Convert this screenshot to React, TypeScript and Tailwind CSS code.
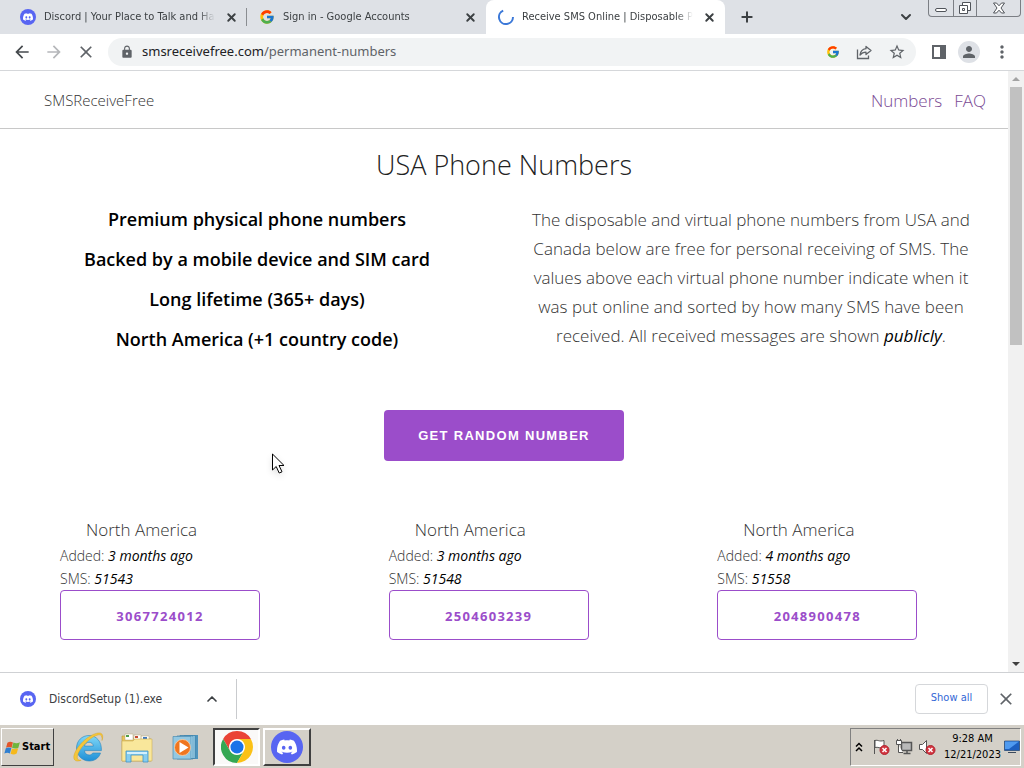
import type { ReactNode } from 'react'
import { FcGoogle } from 'react-icons/fc'
import { SiDiscord } from 'react-icons/si'
import { MdArrowBack, MdArrowForward, MdClose, MdLock, MdMoreVert, MdPerson, MdStarOutline } from 'react-icons/md'
import { ChevronDown, ChevronUp, Plus, X } from 'lucide-react'

interface TabProps {
  icon: ReactNode
  title: string
  active?: boolean
  separator?: boolean
}

interface PhoneNumber {
  number: string
  added: string
  sms: number
}

const highlights = [
  'Premium physical phone numbers',
  'Backed by a mobile device and SIM card',
  'Long lifetime (365+ days)',
  'North America (+1 country code)',
]

const numbers: PhoneNumber[] = [
  { number: '3067724012', added: '3 months ago', sms: 51543 },
  { number: '2504603239', added: '3 months ago', sms: 51548 },
  { number: '2048900478', added: '4 months ago', sms: 51558 },
]

function DiscordBadge({ large = false }: { large?: boolean }) {
  return (
    <span className={`flex shrink-0 items-center justify-center rounded-full bg-[#5865f2] text-white ${large ? 'size-8' : 'size-4'}`}>
      <SiDiscord className={large ? 'size-5' : 'size-[10px]'} />
    </span>
  )
}

function Spinner() {
  return (
    <svg viewBox="0 0 16 16" className="size-4 shrink-0" fill="none" stroke="#3b78d8" strokeWidth="2">
      <path d="M5.2 1.6A7 7 0 1 0 15 8" />
    </svg>
  )
}

function ChromeLogo() {
  return (
    <svg viewBox="0 0 48 48" className="size-8">
      <circle cx="24" cy="24" r="13" fill="#fff" />
      <path fill="#ea4335" d="M24 12h20.78A24 24 0 0 0 3.21 12l10.4 18A12 12 0 0 1 24 12z" />
      <path fill="#34a853" d="M34.39 30 24 48A24 24 0 0 1 3.21 12l10.4 18a12 12 0 0 0 20.78 0z" />
      <path fill="#fbc116" d="M24 12h20.78A24 24 0 0 1 24 48l10.39-18A12 12 0 0 0 24 12z" />
      <circle cx="24" cy="24" r="9.8" fill="#1a73e8" />
    </svg>
  )
}

function WindowsFlag() {
  return (
    <svg viewBox="0 1 15 13" className="h-[15px] w-[17px] shrink-0">
      <path fill="#e2552a" d="M3 3.2C4.800 2 6.300 2.200 7.900 3L6.700 7.700C5 6.800 3.600 6.800 1.800 7.700z" />
      <path fill="#6fb53c" d="M8.300 3.100c1.700.8 3.700.9 5.700-.2l-1.300 4.800c-1.700 1-3.700 1-5.600.1z" />
      <path fill="#2f7fd0" d="M1.600 8.200c1.700-1 3.200-1 4.900-.2L5.200 12.700c-1.600-.8-3.200-.8-4.900.2z" />
      <path fill="#f6b91c" d="M7 8.300c1.700.8 3.600.9 5.500-.1l-1.300 4.600c-1.700 1-3.500 1-5.400.2z" />
    </svg>
  )
}

function ExplorerIcon() {
  return (
    <svg viewBox="0 0 32 32" className="size-8">
      <defs>
        <linearGradient id="ie" x1="0" y1="0" x2="0" y2="1">
          <stop offset="0" stopColor="#7fd8f8" />
          <stop offset="1" stopColor="#1f8fd6" />
        </linearGradient>
      </defs>
      <path
        fill="url(#ie)"
        stroke="#2583bd"
        strokeWidth=".6"
        d="M17 4.500C10 4.500 4.500 9.800 4.500 17S10 30 17.300 30c5.200 0 9.600-2.800 11.200-8h-7.800c-.7 1.400-2 2-3.600 2-2.700 0-4.400-1.700-4.600-4.400h16.900C29.900 10.800 24.500 4.500 17 4.500zm-4.500 10.600c.5-2.500 2.100-3.800 4.500-3.800s4 1.300 4.400 3.800z"
      />
      <path
        fill="#f4c63a"
        stroke="#d39c1c"
        strokeWidth=".4"
        d="M30 9.500c1.300-3.500 1-6.500-1.300-7.300-3-1.100-9 1.300-14.500 5.500C4.800 15.200-.5 25.500 2.700 29c1.300 1.500 3.700 1.300 6.500.2-2.200.2-3.700-.6-3.900-2.500C4.900 22.700 9.500 15.200 16.500 9.400c5-4.100 10-6.300 11.900-5.400 1.300.6 1.800 2.700 1.600 5.500z"
      />
    </svg>
  )
}

function FolderIcon() {
  return (
    <svg viewBox="0 0 32 32" className="size-8">
      <path fill="#e6c45e" stroke="#b9943a" strokeWidth=".6" d="M1 5h10l2 3h17v22H1z" />
      <path fill="#fff" stroke="#b9a878" strokeWidth=".5" d="M4 3h8v6H4zM13 4h7v5h-7zM20 5h8v5h-8z" />
      <path fill="#4f9f4a" d="M5 4h3v2H5z" />
      <path fill="#c74a32" d="M14 5h3v2h-3z" />
      <path fill="#3d78c0" d="M22 6h4v2h-4z" />
      <path fill="#f9e79b" stroke="#cfae55" strokeWidth=".6" d="M1 10h11l2-2h17v22H1z" />
      <path fill="#86cdf0" stroke="#3f92c8" strokeWidth=".8" d="M5 20h22v11h-5v-7H10v7H5z" />
      <path fill="#d3f0fd" d="M6 21h20v2H6z" />
    </svg>
  )
}

function MediaPlayerIcon() {
  return (
    <svg viewBox="0 0 32 32" className="size-8">
      <path fill="#4e94bd" d="M14 4h14v24H14z" />
      <path fill="#a9daf2" stroke="#3b7fa8" strokeWidth=".7" d="M10 4.500h15v23H10zM7 5h16v23H7z" />
      <path fill="#93c8e2" stroke="#4c8db1" strokeWidth=".7" d="M3 5.500h18v22.500H3z" />
      <circle cx="12.500" cy="16.500" r="8" fill="#f0761f" stroke="#fbd0a8" strokeWidth=".8" />
      <path fill="#fff" d="M9.500 11 18.500 16.500 9.500 22z" />
    </svg>
  )
}

function ShareIcon() {
  return (
    <svg viewBox="0 0 16 16" className="size-4" fill="none" stroke="#5f6368" strokeWidth="1.3">
      <path d="M1.500 5.500v9h11v-3" />
      <path strokeLinejoin="round" d="M10 2.500 15 6.500l-5 4V8.200c-2.600 0-4.400.8-6 2.800.4-3.500 2.500-5.800 6-6.300z" />
    </svg>
  )
}

function TrayIcon({ children, blocked = false }: { children: ReactNode; blocked?: boolean }) {
  return (
    <svg viewBox="0 0 18 18" className="size-[18px] shrink-0" fill="#fff" stroke="#555" strokeWidth="1">
      {children}
      {blocked && (
        <>
          <circle cx="12.500" cy="12" r="4.500" fill="#d3343f" stroke="#b02430" />
          <path stroke="#fff" strokeWidth="1.500" d="m10.500 10 4 4m0-4-4 4" />
        </>
      )}
    </svg>
  )
}

function Tab({ icon, title, active = false, separator = false }: TabProps) {
  return (
    <div
      className={`relative flex h-full w-[239px] min-w-0 items-center gap-2 pl-3 pr-2 ${
        active ? 'rounded-t-lg bg-white' : ''
      }`}
    >
      {icon}
      <span className="min-w-0 flex-1 overflow-hidden whitespace-nowrap mask-r-from-90% text-[11px] text-[#3c4043]">{title}</span>
      <button aria-label={`Close ${title}`} className="flex size-4 items-center justify-center text-[#3c4043]">
        <X className="size-[13px]" strokeWidth={3.500} />
      </button>
      {separator && <span className="absolute right-0 top-2 h-[18px] w-px bg-[#8a8d91]" />}
    </div>
  )
}

function TabStrip() {
  return (
    <div className="flex h-[34px] shrink-0 bg-[#dee1e6] pl-2">
      <Tab icon={<DiscordBadge />} title="Discord | Your Place to Talk and Han" separator />
      <Tab icon={<FcGoogle className="size-4 shrink-0" />} title="Sign in - Google Accounts" />
      <Tab icon={<Spinner />} title="Receive SMS Online | Disposable Ph" active />
      <button aria-label="New tab" className="ml-3 flex w-5 items-center justify-center text-[#3c4043]">
        <Plus className="size-4" strokeWidth={3} />
      </button>
      <div className="flex-1" />
      <button aria-label="Search tabs" className="mr-3 flex w-5 items-center justify-center text-[#3c4043]">
        <ChevronDown className="size-4" strokeWidth={3} />
      </button>
      <div className="mr-[3px] flex h-[17px] rounded-b border border-t-0 border-[#7b7e84] text-[#50545a]">
        <button aria-label="Minimize" className="flex w-6 items-end justify-center pb-1">
          <span className="h-1 w-3 rounded-sm border border-current bg-white" />
        </button>
        <button aria-label="Restore" className="flex w-6 items-center justify-center border-x border-[#7b7e84]">
          <svg viewBox="0 0 14 14" className="size-[14px]" fill="#fff" stroke="currentColor">
            <path d="M4.500 1.500h8v8h-8z" />
            <path d="M1.500 4.500h8v8h-8zM4.500 7.500h2v2h-2z" />
          </svg>
        </button>
        <button aria-label="Close window" className="flex w-[43px] items-center justify-center">
          <svg viewBox="0 0 14 12" className="h-3 w-[14px]" fill="#fff" stroke="currentColor">
            <path d="M1.500 1h3L7 3.800 9.500 1h3L9 6l3.500 5h-3L7 8.200 4.500 11h-3L5 6z" />
          </svg>
        </button>
      </div>
    </div>
  )
}

function Toolbar() {
  return (
    <div className="flex h-[37px] shrink-0 items-center border-b border-[#d5d7da] bg-white px-3 text-[#5f6368]">
      <div className="flex gap-3">
        <button aria-label="Back" className="text-[#45494d]"><MdArrowBack className="size-5" /></button>
        <button aria-label="Forward" className="text-[#b5b7ba]"><MdArrowForward className="size-5" /></button>
        <button aria-label="Stop loading"><MdClose className="size-5" /></button>
      </div>
      <div className="ml-3 flex h-7 flex-1 items-center gap-4 rounded-full bg-[#f1f3f4] pl-3 pr-[10px]">
        <MdLock className="size-[14px] shrink-0" />
        {/* the typed address is shown in two tones, so the field's own text stays transparent */}
        <div className="relative -ml-2 flex-1 font-['Noto_Sans',sans-serif] text-[13px]">
          <input
            aria-label="Address"
            defaultValue="smsreceivefree.com/permanent-numbers"
            className="w-full bg-transparent text-transparent caret-black outline-none"
          />
          <span aria-hidden="true" className="pointer-events-none absolute inset-0 whitespace-nowrap">
            <span className="text-[#202124]">smsreceivefree.com</span>/permanent-numbers
          </span>
        </div>
        <button aria-label="Search with Google"><FcGoogle className="size-[14px]" /></button>
        <button aria-label="Share"><ShareIcon /></button>
        <button aria-label="Bookmark this page"><MdStarOutline className="size-[18px]" /></button>
      </div>
      <div className="ml-4 flex items-center gap-3">
        <button aria-label="Side panel" className="flex h-[14px] w-[14px] justify-end border-2 border-current">
          <span className="h-full w-1 bg-current" />
        </button>
        <button aria-label="Profile" className="flex size-[22px] items-center justify-center rounded-full bg-[#dee1e6]">
          <MdPerson className="size-[18px]" />
        </button>
        <button aria-label="Menu"><MdMoreVert className="size-5" /></button>
      </div>
    </div>
  )
}

function NumberCard({ number, added, sms }: PhoneNumber) {
  return (
    <div className="pl-[49px]">
      <h2 className="pl-[26px] text-[17px] leading-[28px]">North America</h2>
      <p className="text-[14px] leading-[23px]">
        Added: <em className="font-normal text-black">{added}</em>
      </p>
      <p className="text-[14px] leading-[23px]">
        SMS: <em className="font-normal text-black">{sms}</em>
      </p>
      <button className="h-[50px] w-[200px] rounded border border-[#9b4dca] pt-1 text-[13px] font-bold tracking-widest text-[#9b4dca]">
        {number}
      </button>
    </div>
  )
}

function Page() {
  return (
    <main className="min-w-0 flex-1 overflow-hidden bg-white font-['Open_Sans','Noto_Sans',sans-serif] font-light text-[#333]">
      <nav className="flex h-[58px] items-center justify-between border-b border-[#c8c8c8] pt-[2px] pl-11 pr-[22px]">
        <a href="#home" className="text-[15px]">SMSReceiveFree</a>
        <div className="flex gap-3 text-[17px] text-[#7a4a94]">
          <a href="#numbers">Numbers</a>
          <a href="#faq">FAQ</a>
        </div>
      </nav>
      <h1 className="pt-4 text-center text-[27px] leading-[40px] text-[#222]">USA Phone Numbers</h1>
      <section className="mt-5 grid grid-cols-2 px-[10px] text-center text-[17px]">
        <div className="px-5 text-[18px] font-semibold text-black">
          {highlights.map((text) => (
            <p key={text} className="mb-3 leading-[28px]">{text}</p>
          ))}
        </div>
        <p className="px-5 leading-[29px]">
          The disposable and virtual phone numbers from USA and Canada below are free for personal receiving of SMS. The
          values above each virtual phone number indicate when it was put online and sorted by how many SMS have been
          received. All received messages are shown <em className="font-normal text-black">publicly</em>.
        </p>
      </section>
      <div className="mt-[45px] flex justify-center">
        <button className="h-[51px] w-60 rounded bg-[#9b4dca] font-['Liberation_Sans',sans-serif] text-[13px] font-bold tracking-widest text-white uppercase">
          Get random number
        </button>
      </div>
      <section className="mt-[55px] grid grid-cols-3 px-[11px]">
        {numbers.map((item) => (
          <NumberCard key={item.number} {...item} />
        ))}
      </section>
    </main>
  )
}

function Scrollbar() {
  return (
    <div className="flex w-4 shrink-0 flex-col items-center bg-[#f1f1f1]">
      <svg viewBox="0 0 16 16" className="size-4 shrink-0" fill="#a3a3a3"><path d="M4 10h8L8 6z" /></svg>
      <div className="h-3/7 w-3 bg-[#c1c1c1]" />
      <div className="flex-1" />
      <svg viewBox="0 0 16 16" className="size-4 shrink-0" fill="#404040"><path d="M4 6h8l-4 4z" /></svg>
    </div>
  )
}

function DownloadBar() {
  return (
    <div className="flex h-[52px] shrink-0 items-center border-t border-[#cfd1d4] bg-white pr-2 text-[#3c4043]">
      <div className="flex h-10 w-[237px] items-center border-r border-[#c9cbce] pl-5 pr-4">
        <DiscordBadge />
        <span className="ml-[13px] flex-1 text-[12px]">DiscordSetup (1).exe</span>
        <button aria-label="Download options"><ChevronUp className="size-4" strokeWidth={2.500} /></button>
      </div>
      <div className="flex-1" />
      <button className="h-[30px] w-[73px] rounded border border-[#d5d7da] text-[11px] text-[#3367d6]">Show all</button>
      <button aria-label="Close downloads" className="ml-2 text-[#5f6368]"><MdClose className="size-5" /></button>
    </div>
  )
}

function Taskbar() {
  return (
    <footer className="flex h-11 shrink-0 items-stretch border-t border-white bg-[#d4d0c8] pt-[3px] pb-[2px] pl-px pr-[3px] text-black">
      <button className="flex w-[53px] items-center gap-px border border-t-white border-r-[#404040] border-b-[#404040] border-l-white pl-[2px] text-[11px] font-bold">
        <WindowsFlag />
        Start
      </button>
      <div className="ml-[18px] flex items-center gap-[17px]">
        <button aria-label="Internet Explorer"><ExplorerIcon /></button>
        <button aria-label="File Explorer"><FolderIcon /></button>
        <button aria-label="Media Player"><MediaPlayerIcon /></button>
      </div>
      <button
        aria-label="Chrome"
        className="ml-[11px] flex w-[47px] items-center justify-center border-2 border-t-[#404040] border-r-white border-b-white border-l-[#404040] bg-[#faf9f8]"
      >
        <ChromeLogo />
      </button>
      <button
        aria-label="Discord"
        className="ml-[3px] flex w-12 items-center justify-center border-2 border-t-white border-r-[#404040] border-b-[#404040] border-l-white"
      >
        <DiscordBadge large />
      </button>
      <div className="flex-1" />
      <div className="flex items-center border border-t-[#808080] border-r-white border-b-white border-l-[#808080] pl-1">
        <button aria-label="Show hidden icons">
          <svg viewBox="0 0 8 10" className="h-[10px] w-2" fill="none" stroke="#000" strokeWidth="1.500">
            <path d="m1 4.500 3-3 3 3M1 9l3-3 3 3" />
          </svg>
        </button>
        <div className="ml-[9px] flex gap-[5px]">
          <TrayIcon blocked>
            <path d="M2.500 2v14" />
            <path d="M3 2.500c3-1 4 1.500 9 0v7c-4 1.500-6-1-9 0z" />
          </TrayIcon>
          <TrayIcon>
            <path fill="#b9b9b9" strokeWidth="1.500" d="M6.500 4.500h10v8h-10zM8.500 15.500h7M12 13v2" />
            <path d="M1.500 2.500h5v4h-5zM2.500 1v2m3-2v2M3.500 7v7.500H8" />
          </TrayIcon>
          <TrayIcon blocked>
            <path d="M1.500 6.500h3l4-4v13l-4-4h-3z" />
          </TrayIcon>
        </div>
        <div className="ml-2 text-center text-[11px] leading-4">
          <div>9:28 AM</div>
          <div>12/21/2023</div>
        </div>
        <button aria-label="Show desktop" className="ml-[3px]">
          <svg viewBox="0 0 16 14" className="h-[14px] w-4">
            <path fill="#1d5fc0" stroke="#23436f" strokeWidth=".7" d="M.500 1h15v9.500H.500z" />
            <path fill="#4f9af0" d="M1 1.500h14L5 9H1z" />
            <path fill="#3c4a5c" d="M4 12h8v1H4z" />
          </svg>
        </button>
      </div>
    </footer>
  )
}

export default function App() {
  return (
    <div className="relative flex h-screen flex-col overflow-hidden bg-white font-['DejaVu_Sans_Condensed','DejaVu_Sans',sans-serif]">
      <TabStrip />
      <Toolbar />
      <div className="flex min-h-0 flex-1">
        <Page />
        <Scrollbar />
      </div>
      <DownloadBar />
      <Taskbar />
      {/* Mouse pointer */}
      <svg
        viewBox="0 0 14 22"
        className="pointer-events-none absolute left-[272px] top-[453px] h-[22px] w-[14px] drop-shadow-md"
        fill="#fff"
        stroke="#000"
      >
        <path d="M.500 1v16l3.700-3.500 3 6.500 2.800-1.200-3-6.300H12z" />
      </svg>
    </div>
  )
}
